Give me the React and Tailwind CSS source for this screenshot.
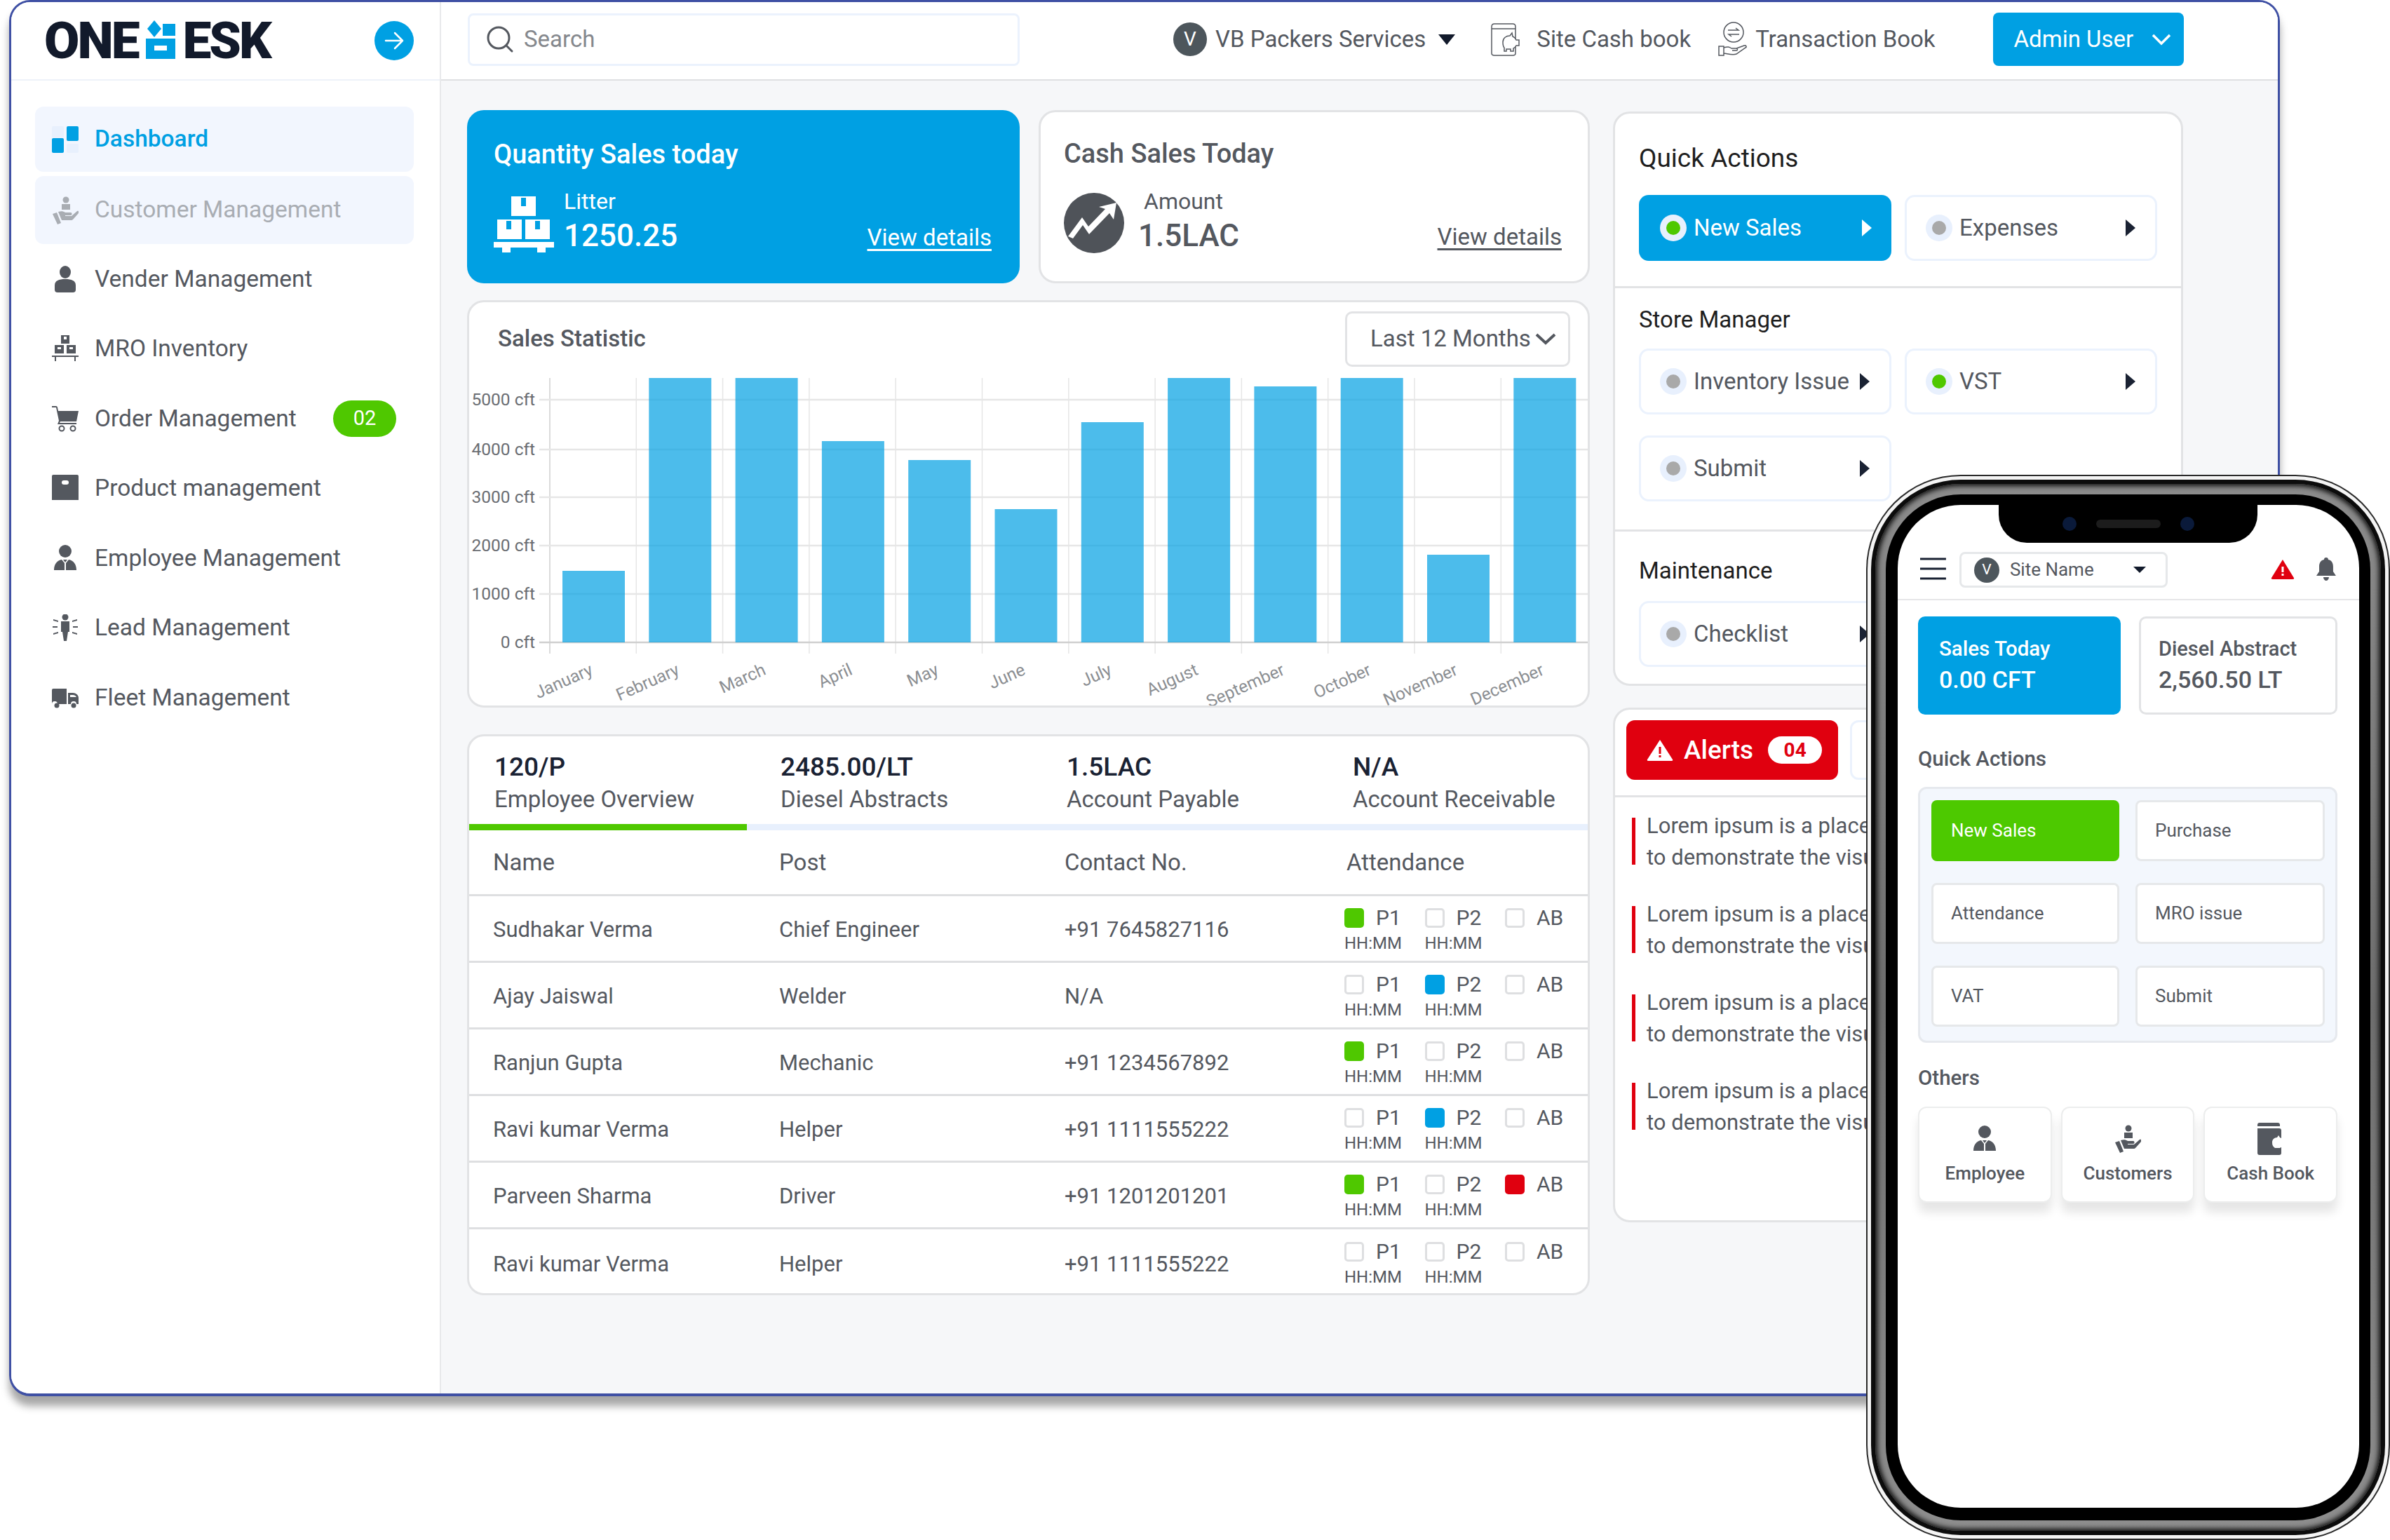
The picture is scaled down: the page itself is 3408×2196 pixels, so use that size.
const gray = '#54585f'

function Dashboard() {
  return (
    <svg viewBox="0 0 38 38" className="w-[38px] h-[38px]">
      <rect x="0" y="0" width="17" height="17" rx="2" fill="#e8f0fd" />
      <rect x="21" y="0" width="17" height="21" rx="2" fill="#00a0e3" />
      <rect x="0" y="17" width="17" height="21" rx="2" fill="#00a0e3" />
      <rect x="21" y="25" width="17" height="13" rx="2" fill="#e8f0fd" />
    </svg>
  )
}

function Customer({ fill = '#a9adb3' }) {
  return (
    <svg viewBox="0 0 38 40" className="w-[38px] h-[40px]" fill={fill}>
      <circle cx="20" cy="5" r="4.5" />
      <path d="M14 11h12v8H14z" />
      <path d="M9 22c4-1 7-1 10 1h8c2 0 2 4 0 4h-8v1h9l8-7c2-1 3 1 2 3l-8 9c-1 1-2 1-4 1H14z" />
      <path d="M1 25l6-2 6 15-5 2z" />
    </svg>
  )
}

function Vender() {
  return (
    <svg viewBox="0 0 38 38" className="w-[38px] h-[38px]" fill={gray}>
      <ellipse cx="19" cy="9" rx="8" ry="9" />
      <path d="M4 34v-6c0-7 6-9 15-9s15 2 15 9v6q0 4-4 4H8q-4 0-4-4z" />
    </svg>
  )
}

function Mro() {
  return (
    <svg viewBox="0 0 38 38" className="w-[38px] h-[38px]" fill={gray}>
      <path d="M13 0h12v12H13zM4 14h13v12H4zM21 14h13v12H21z" />
      <path d="M0 29h38v2h-4v6h-2v-6H6v6H4v-6H0z" />
      <path d="M17 2h4v4h-4zM8 17h5v3H8zM25 17h5v3h-5z" fill="#fff" />
    </svg>
  )
}

function Cart() {
  return (
    <svg viewBox="0 0 38 38" className="w-[38px] h-[38px]" fill={gray}>
      <path d="M0 1h6c1 0 2 1 2 2l1 5h29l-3 15H12l-1 2h24v2H8l2-5L6 3H0z" />
      <circle cx="14" cy="33" r="3.5" fill="none" stroke={gray} strokeWidth="2" />
      <circle cx="30" cy="33" r="3.5" fill="none" stroke={gray} strokeWidth="2" />
    </svg>
  )
}

function Product() {
  return (
    <svg viewBox="0 0 38 38" className="w-[38px] h-[38px]">
      <path d="M2 0h34q2 0 2 2v34H0V2q0-2 2-2z" fill={gray} />
      <rect x="14" y="8" width="10" height="6" rx="3" fill="#fff" />
    </svg>
  )
}

function Employee() {
  return (
    <svg viewBox="0 0 38 38" className="w-[38px] h-[38px]" fill={gray}>
      <circle cx="19" cy="9" r="9" />
      <path d="M3 36c0-9 5-14 11-15l4 5v10zM35 36c0-9-5-14-11-15l-4 5v10z" />
      <path d="M16 21h6l-3 4z" />
    </svg>
  )
}

function Lead() {
  return (
    <svg viewBox="0 0 38 38" className="w-[38px] h-[38px]" fill={gray}>
      <circle cx="19" cy="4" r="4.5" />
      <path d="M13 10h12v15h-2l-2 13h-4l-2-13h-2z" />
      <path d="M2 7l7 2v2L2 9zM36 7l-7 2v2l7-2zM1 17h7v2H1zM30 17h7v2h-7zM2 29l7-2v-2l-7 2zM36 29l-7-2v-2l7 2z" />
    </svg>
  )
}

function Fleet() {
  return (
    <svg viewBox="0 0 38 38" className="w-[38px] h-[38px]" fill={gray}>
      <path d="M2 6h19v22H8a4 4 0 0 0-8 0V8q0-2 2-2z" />
      <path d="M23 12h7c4 0 8 3 8 7v9h-3a4 4 0 0 0-8 0h-4z" />
      <path d="M26 15h4c2 0 4 1 5 3h-9z" fill="#fff" />
      <circle cx="7" cy="30" r="3.5" />
      <circle cx="31" cy="30" r="3.5" />
    </svg>
  )
}

const navRows = [
  ['Vender Management', Vender],
  ['MRO Inventory', Mro],
  ['Order Management', Cart, '02'],
  ['Product management', Product],
  ['Employee Management', Employee],
  ['Lead Management', Lead],
  ['Fleet Management', Fleet],
]

function Logo() {
  return (
    <div className="flex items-center font-black text-[73px] leading-none text-[#121a2b] tracking-[-3px]">
      <span>ONE</span>
      <svg viewBox="0 0 42 55" className="w-[42px] h-[55px] mx-[11px] -mt-[3px] shrink-0">
        <path d="M12 0l10 12-10 12L2 12z" fill="#00a0e3" />
        <rect x="24" y="5" width="18" height="17" fill="#00a0e3" />
        <path d="M0 26h42v29H0z" fill="#00a0e3" />
        <rect x="12" y="36" width="18" height="7" fill="#fff" />
      </svg>
      <span>ESK</span>
    </div>
  )
}

function Sidebar() {
  return (
    <aside className="w-[613px] shrink-0 border-r-2 border-[#e8e9eb] bg-white flex flex-col">
      <div className="h-[112px] shrink-0 flex items-center justify-between pl-[47px] pr-[37px] border-b-2 border-[#eef2f9]">
        <Logo />
        <div className="w-[56px] h-[56px] rounded-full bg-[#00a0e3] flex items-center justify-center">
          <svg viewBox="0 0 32 32" className="w-[32px] h-[32px]" fill="none" stroke="#fff" strokeWidth="2.5" strokeLinecap="round" strokeLinejoin="round">
            <path d="M4 16h24M17 5l11 11-11 11" />
          </svg>
        </div>
      </div>
      <nav className="pt-[37px] pl-[34px] w-[574px]">
        <div className="h-[93px] rounded-[12px] bg-[#f2f6fe] flex items-center pl-[24px] gap-[23px] text-[33.5px] font-medium text-[#00a0e3]">
          <Dashboard />
          <span>Dashboard</span>
        </div>
        <div className="mt-[6px] h-[97px] rounded-[12px] bg-[#f2f6fe] flex items-center pl-[24px] gap-[23px] text-[33.5px] text-[#a9adb3]">
          <Customer />
          <span>Customer Management</span>
        </div>
        {navRows.map(([label, Icon, badge]) => (
          <div key={label} className="h-[99.5px] flex items-center pl-[24px] pr-[25px] gap-[23px] text-[33.5px] text-[#54585f]">
            <Icon />
            <span>{label}</span>
            {badge && (
              <span className="ml-auto w-[90px] h-[52px] rounded-full bg-[#4fc800] text-white text-[29px] flex items-center justify-center">{badge}</span>
            )}
          </div>
        ))}
      </nav>
    </aside>
  )
}

function TopBar() {
  return (
    <header className="h-[112px] shrink-0 bg-white border-b-2 border-[#dfe0e2] flex items-center pl-[38px] pb-[4px]">
      <div className="w-[787px] h-[75px] rounded-[8px] border-[3px] border-[#ebf2fd] flex items-center pl-[23px] gap-[14px] text-[33px] text-[#85888d]">
        <svg viewBox="0 0 40 40" className="w-[40px] h-[40px]" fill="none" stroke={gray} strokeWidth="3" strokeLinecap="round">
          <circle cx="18" cy="18" r="15" />
          <path d="M29 29l8 8" />
        </svg>
        <span>Search</span>
      </div>
      <div className="ml-[219px] w-[48px] h-[48px] rounded-full bg-[#4d565c] text-white text-[28px] flex items-center justify-center">V</div>
      <span className="ml-[12px] text-[33px] text-[#54585f]">VB Packers Services</span>
      <span className="ml-[18px] w-0 h-0 border-x-[12px] border-x-transparent border-t-[15px] border-t-[#121a2b]"></span>
      <svg viewBox="0 0 46 48" className="ml-[50px] w-[46px] h-[48px]" fill="none" stroke={gray} strokeWidth="1.5">
        <path d="M2 6q0-4 4-4h26q4 0 4 4v38q0 3-4 3H6q-4 0-4-3zM2 9h34" />
        <path d="M18 28c0-6 5-9 10-9l3-4 1 5c3 1 4 3 5 5h4v8h-4c-1 2-2 3-4 4v4h-4v-3h-6v3h-3v-5c-2-2-2-4-2-8z" fill="#fff" />
      </svg>
      <span className="ml-[20px] text-[33px] text-[#54585f]">Site Cash book</span>
      <svg viewBox="0 0 42 50" className="ml-[39px] w-[42px] h-[50px]" fill="none" stroke={gray} strokeWidth="1.5">
        <circle cx="22" cy="15" r="14" />
        <path d="M14 12h15l-4-3M30 18H15l4 3" />
        <path d="M1 35h7v13H1zM8 37c6-2 8-1 11 1h7c2 0 2 3 0 3h-6M26 38l11-4c3-1 4 2 2 3L26 46c-5 2-11 0-18-1" />
      </svg>
      <span className="ml-[11px] text-[33px] text-[#54585f]">Transaction Book</span>
      <div className="ml-[82px] w-[272px] h-[76px] rounded-[8px] bg-[#00a0e3] flex items-center pl-[30px] text-[33px] text-white">
        <span>Admin User</span>
        <svg viewBox="0 0 28 18" className="ml-[26px] w-[28px] h-[18px]" fill="none" stroke="#fff" strokeWidth="3.5">
          <path d="M2 3l12 12L26 3" />
        </svg>
      </div>
    </header>
  )
}

function StatCards() {
  return (
    <div className="flex gap-[27px]">
      <div className="w-[788px] h-[247px] rounded-[24px] bg-[#00a0e3] text-white pl-[38px] pr-[40px] pt-[40px]">
        <div className="text-[38px] font-medium leading-[46px]">Quantity Sales today</div>
        <div className="mt-[37px] flex">
          <svg viewBox="0 0 86 80" className="w-[86px] h-[80px] shrink-0" fill="#fff">
            <path d="M25 0h35v28H25z" />
            <path d="M5 33h35v28H5zM45 33h35v28H45z" />
            <path d="M0 65h86v8H74v7H62v-7H24v7H12v-7H0z" />
            <path d="M39 2h7v12h-7zM18 35h7v12h-7zM59 35h7v12h-7z" fill="#00a0e3" />
          </svg>
          <div className="ml-[14px] -mt-[16px]">
            <div className="text-[32px] leading-[46px]">Litter</div>
            <div className="text-[44px] font-medium leading-[52px]">1250.25</div>
          </div>
          <span className="ml-auto self-end text-[33px] underline underline-offset-[5px] leading-[46px]">View details</span>
        </div>
      </div>
      <div className="w-[786px] h-[247px] rounded-[24px] bg-white border-[3px] border-[#e2e3e5] pl-[33px] pr-[37px] pt-[36px] text-[#54585f]">
        <div className="text-[38px] font-medium leading-[46px]">Cash Sales Today</div>
        <div className="mt-[33px] flex">
          <svg viewBox="0 0 86 86" className="w-[86px] h-[86px] shrink-0">
            <circle cx="43" cy="43" r="43" fill="#4f5359" />
            <path d="M6 62l20-27 9 13 24-25-9-3 25-6-4 24-6-9-29 30-9-13-14 19z" fill="#fff" />
          </svg>
          <div className="ml-[20px] -mt-[11px]">
            <div className="text-[32px] leading-[46px] ml-[8px]">Amount</div>
            <div className="text-[44px] font-medium leading-[52px]">1.5LAC</div>
          </div>
          <span className="ml-auto self-end text-[33px] underline underline-offset-[5px] leading-[46px] mb-[1px]">View details</span>
        </div>
      </div>
    </div>
  )
}

const months = ['January', 'February', 'March', 'April', 'May', 'June', 'July', 'August', 'September', 'October', 'November', 'December']
const tops = [814, 539, 539, 629, 656, 726, 602, 539, 551, 539, 791, 539]
const yTicks = [[570, '5000 cft'], [641, '4000 cft'], [709, '3000 cft'], [778, '2000 cft'], [847, '1000 cft'], [916, '0 cft']]

function SalesChart() {
  return (
    <div className="mt-[24px] h-[581px] rounded-[24px] bg-white border-[3px] border-[#e2e3e5] overflow-hidden">
      <div className="h-[96px] flex items-center justify-between pl-[41px] pr-[25px] pt-[8px]">
        <span className="text-[33px] font-medium text-[#54585f]">Sales Statistic</span>
        <div className="w-[321px] h-[79px] rounded-[10px] border-[3px] border-[#e2e3e5] flex items-center pl-[33px] text-[33px] text-[#54585f]">
          <span>Last 12 Months</span>
          <svg viewBox="0 0 30 18" className="ml-[6px] w-[30px] h-[18px]" fill="none" stroke={gray} strokeWidth="4">
            <path d="M2 3l13 12L28 3" />
          </svg>
        </div>
      </div>
      {/* viewBox uses page coordinates so the numbers read straight off the picture */}
      <svg viewBox="669 527 1595 479" className="w-[1595px] h-[479px] block">
        {months.map((m, i) => (
          <line key={m} x1={784 + 123.3 * i} x2={784 + 123.3 * i} y1="539" y2="932" stroke={i === 0 ? '#cfcfcf' : '#e6e6e6'} strokeWidth="1.5" />
        ))}
        {yTicks.map(([y, label]) => (
          <g key={label}>
            <line x1="769" x2="2264" y1={y} y2={y} stroke={y === 916 ? '#cfcfcf' : '#e6e6e6'} strokeWidth="2.5" />
            <text x="763" y={y + 8} textAnchor="end" fontFamily="Roboto, sans-serif" fontSize="24.5" fill="#6b6e73">{label}</text>
          </g>
        ))}
        {months.map((m, i) => (
          <rect key={m} x={802 + 123.3 * i} y={tops[i]} width="89" height={916 - tops[i]} fill="#00a0e3" fillOpacity="0.7" />
        ))}
        {months.map((m, i) => (
          <text key={m} x={847 + 123.3 * i} y="961" textAnchor="end" fontFamily="Roboto, sans-serif" fontSize="24.5" fill="#8b8e92" transform={`rotate(-24 ${847 + 123.3 * i} 961)`}>{m}</text>
        ))}
      </svg>
    </div>
  )
}

const tabs = [
  ['120/P', 'Employee Overview'],
  ['2485.00/LT', 'Diesel Abstracts'],
  ['1.5LAC', 'Account Payable'],
  ['N/A', 'Account Receivable'],
]

// p1, p2, ab colours, empty string is an unchecked box
const rows = [
  ['Sudhakar Verma', 'Chief Engineer', '+91 7645827116', ['#4fc800', '', '']],
  ['Ajay Jaiswal', 'Welder', 'N/A', ['', '#00a0e3', '']],
  ['Ranjun Gupta', 'Mechanic', '+91 1234567892', ['#4fc800', '', '']],
  ['Ravi kumar Verma', 'Helper', '+91 1111555222', ['', '#00a0e3', '']],
  ['Parveen Sharma', 'Driver', '+91 1201201201', ['#4fc800', '', '#e0000f']],
  ['Ravi kumar Verma', 'Helper', '+91 1111555222', ['', '', '']],
]

function CheckCell({ color, label, time }) {
  return (
    <div className="w-[114.5px] shrink-0">
      <div className="flex items-center h-[30px]">
        {color ? (
          <span className="w-[28px] h-[28px] rounded-[5px]" style={{ backgroundColor: color }}></span>
        ) : (
          <span className="w-[28px] h-[28px] rounded-[5px] border-[3px] border-[#dedfe1] bg-white"></span>
        )}
        <span className="ml-[17px] text-[30px] leading-none">{label}</span>
      </div>
      {time && <div className="mt-[6px] text-[24px] leading-[30px] whitespace-nowrap">HH:MM</div>}
    </div>
  )
}

function EmployeeTable() {
  return (
    <div className="mt-[38px] h-[800px] rounded-[24px] bg-white border-[3px] border-[#e2e3e5] overflow-hidden text-[#54585f]">
      <div className="grid grid-cols-[408px_408px_408px_370px] h-[125px] pl-[36px]">
        {tabs.map(([value, label]) => (
          <div key={label} className="pt-[20px]">
            <div className="text-[37px] font-medium text-[#1a2233] leading-[48px]">{value}</div>
            <div className="text-[33px] leading-[44px] whitespace-nowrap">{label}</div>
          </div>
        ))}
      </div>
      <div className="h-[9px] bg-[#e8f0fd]">
        <div className="h-full w-[396px] bg-[#4fc800]"></div>
      </div>
      <div className="grid grid-cols-[408px_407px_402px_1fr] h-[94px] items-center pl-[34px] text-[33px] border-b-[3px] border-[#dedfe1]">
        <span>Name</span>
        <span>Post</span>
        <span>Contact No.</span>
        <span>Attendance</span>
      </div>
      {rows.map(([name, post, phone, marks], i) => (
        <div key={i} className={`grid grid-cols-[408px_407px_399px_1fr] h-[95px] items-center pl-[34px] pt-[5px] text-[31px] ${i < rows.length - 1 ? 'border-b-[3px] border-[#dedfe1]' : ''}`}>
          <span>{name}</span>
          <span>{post}</span>
          <span>{phone}</span>
          <div className="flex">
            <CheckCell color={marks[0]} label="P1" time />
            <CheckCell color={marks[1]} label="P2" time />
            <CheckCell color={marks[2]} label="AB" />
          </div>
        </div>
      ))}
    </div>
  )
}

function ActionBtn({ label, on, dot }) {
  return (
    <div className={`w-[360px] h-[94px] rounded-[14px] flex items-center text-[33px] ${on ? 'bg-[#00a0e3] text-white pl-[30px]' : 'bg-white border-[3px] border-[#ebf2fd] text-[#54585f] pl-[27px]'}`}>
      <span className="w-[38px] h-[38px] rounded-full bg-[#e8f0fd] flex items-center justify-center shrink-0">
        <span className="w-[20px] h-[20px] rounded-full" style={{ backgroundColor: dot === 'green' ? '#4fc800' : '#a9a9a9' }}></span>
      </span>
      <span className="ml-[10px] whitespace-nowrap">{label}</span>
      <span className={`ml-auto mr-[28px] w-0 h-0 shrink-0 border-y-[12px] border-y-transparent border-l-[14px] ${on ? 'border-l-white' : 'border-l-[#1a2233]'}`}></span>
    </div>
  )
}

function QuickActions() {
  return (
    <div className="h-[819px] rounded-[24px] bg-white border-[3px] border-[#e2e3e5] overflow-hidden">
      <div className="h-[249px] border-b-[3px] border-[#e2e3e5] pl-[34px]">
        <div className="pt-[38px] text-[37px] leading-[52px] text-[#1e1e1e]">Quick Actions</div>
        <div className="mt-[26px] flex gap-[19px]">
          <ActionBtn label="New Sales" on dot="green" />
          <ActionBtn label="Expenses" />
        </div>
      </div>
      <div className="h-[347px] border-b-[3px] border-[#e2e3e5] pl-[34px]">
        <div className="pt-[23px] text-[33px] leading-[44px] text-[#1e1e1e]">Store Manager</div>
        <div className="mt-[19px] flex flex-wrap gap-x-[19px] gap-y-[30px]">
          <ActionBtn label="Inventory Issue" />
          <ActionBtn label="VST" dot="green" />
          <ActionBtn label="Submit" />
        </div>
      </div>
      <div className="pl-[34px]">
        <div className="pt-[34px] text-[33px] leading-[44px] text-[#1e1e1e]">Maintenance</div>
        <div className="mt-[21px]">
          <ActionBtn label="Checklist" />
        </div>
      </div>
    </div>
  )
}

function Alerts() {
  return (
    <div className="mt-[31px] h-[734px] rounded-[24px] bg-white border-[3px] border-[#e2e3e5] overflow-hidden">
      <div className="h-[125px] border-b-[3px] border-[#e2e3e5] flex pt-[15px] pl-[16px] gap-[17px]">
        <div className="w-[302px] h-[85px] rounded-[12px] bg-[#e0000f] flex items-center pl-[29px] text-white text-[37px] font-medium">
          <svg viewBox="0 0 38 32" className="w-[38px] h-[32px]">
            <path d="M19 1l18 28q1 2-2 2H3q-3 0-2-2z" fill="#fff" />
            <rect x="17.5" y="11" width="3" height="10" fill="#e0000f" />
            <rect x="17.5" y="23" width="3" height="3" fill="#e0000f" />
          </svg>
          <span className="ml-[15px]">Alerts</span>
          <span className="ml-[21px] w-[77px] h-[39px] rounded-full bg-white text-[#e0000f] text-[28px] font-bold flex items-center justify-center">04</span>
        </div>
        <div className="w-[200px] h-[85px] rounded-[12px] bg-white border-[3px] border-[#ebf2fd]"></div>
      </div>
      {[0, 1, 2, 3].map((i) => (
        <div key={i} className={`flex ml-[24px] ${i === 0 ? 'mt-[29px]' : 'mt-[47px]'}`}>
          <div className="w-[5px] h-[67px] bg-[#e0000f] shrink-0"></div>
          <div className="ml-[16px] -mt-[11px] text-[31px] leading-[45px] text-[#54585f] whitespace-nowrap">
            <div>Lorem ipsum is a placeholder text commonly used</div>
            <div>to demonstrate the visual form of a document</div>
          </div>
        </div>
      ))}
    </div>
  )
}

function Phone() {
  return (
    <div className="absolute left-[2661px] top-[677px] w-[747px] h-[1519px] rounded-[135px] bg-[#2a2a2a] p-[2px]">
      <div className="w-full h-full rounded-[133px] bg-[#f4f4f4] p-[5px]">
        <div className="w-full h-full rounded-[128px] bg-[#0c0c0c] p-[6px]">
          <div className="w-full h-full rounded-[122px] bg-linear-to-b from-[#8c8c8c] via-[#6e6e6e] to-[#8e8e8e] shadow-[inset_0_0_7px_3px_#111] p-[15px]">
            <div className="w-full h-full rounded-[107px] bg-black pt-[15px] pl-[17px] pr-[16px] pb-[18px]">
              <PhoneScreen />
            </div>
          </div>
        </div>
      </div>
    </div>
  )
}

const phoneButtons = ['New Sales', 'Purchase', 'Attendance', 'MRO issue', 'VAT', 'Submit']

function PhoneScreen() {
  return (
    <div className="relative w-full h-full rounded-[90px] bg-white overflow-hidden text-[#54585f]">
      {/* notch */}
      <div className="absolute left-[144px] top-0 w-[369px] h-[54px] bg-black rounded-b-[40px] flex items-center justify-center gap-[28px]">
        <span className="w-[20px] h-[20px] rounded-full bg-[#0a1a3a]"></span>
        <span className="w-[92px] h-[12px] rounded-full bg-[#1c1c1c]"></span>
        <span className="w-[20px] h-[20px] rounded-full bg-[#0a1a3a]"></span>
      </div>
      <div className="h-[136px] border-b-2 border-[#e6e6e8] pt-[67px] pl-[32px] pr-[33px] flex items-start">
        <svg viewBox="0 0 37 32" className="mt-[8px] w-[37px] h-[32px]" stroke="#1a2233" strokeWidth="3">
          <path d="M0 2h37M0 16h37M0 30h37" />
        </svg>
        <div className="ml-[19px] w-[298px] h-[51px] rounded-[8px] border-[3px] border-[#e6e8ea] flex items-center pl-[18px]">
          <span className="w-[36px] h-[36px] rounded-full bg-[#4d565c] text-white text-[21px] flex items-center justify-center">V</span>
          <span className="ml-[15px] text-[26px]">Site Name</span>
          <span className="ml-auto mr-[28px] w-0 h-0 border-x-[9px] border-x-transparent border-t-[9px] border-t-[#121a2b]"></span>
        </div>
        <svg viewBox="0 0 34 30" className="ml-[147px] mt-[10px] w-[34px] h-[30px]">
          <path d="M17 1l16 26q1 2-2 2H3q-3 0-2-2z" fill="#e0000f" />
          <rect x="15.5" y="11" width="3" height="8" fill="#fff" />
          <rect x="15.5" y="21" width="3" height="3" fill="#fff" />
        </svg>
        <svg viewBox="0 0 28 34" className="ml-[31px] mt-[8px] w-[28px] h-[34px]" fill="#54585f">
          <path d="M14 0c2 0 3 1 3 3 5 1 7 5 7 10v7l4 6H0l4-6v-7c0-5 2-9 7-10 0-2 1-3 3-3z" />
          <path d="M10 28h8c0 3-2 5-4 5s-4-2-4-5z" />
        </svg>
      </div>
      <div className="pl-[29px] pr-[31px] pt-[23px]">
        <div className="flex gap-[26px]">
          <div className="w-[289px] h-[140px] rounded-[10px] bg-[#00a0e3] text-white pl-[30px] pt-[26px]">
            <div className="text-[29.5px] font-medium leading-[40px]">Sales Today</div>
            <div className="text-[34px] font-medium leading-[46px] mt-[1px]">0.00 CFT</div>
          </div>
          <div className="w-[283px] h-[140px] rounded-[10px] border-[3px] border-[#e2e3e5] pl-[25px] pt-[23px] whitespace-nowrap">
            <div className="text-[29px] font-medium leading-[40px]">Diesel Abstract</div>
            <div className="text-[34px] font-medium leading-[46px] mt-[1px]">2,560.50 LT</div>
          </div>
        </div>
        <div className="mt-[47px] text-[29.5px] font-medium leading-[32px]">Quick Actions</div>
        <div className="mt-[24px] h-[365px] rounded-[12px] border-[3px] border-[#e6e9ee] bg-[#f3f7fd] pl-[16px] pt-[16px] grid grid-cols-[268px_270px] auto-rows-[87px] gap-x-[23px] gap-y-[31px]">
          {phoneButtons.map((label, i) => (
            <div key={label} className={`rounded-[8px] flex items-center text-[26px] ${i === 0 ? 'bg-[#4dc900] text-white pl-[28px]' : 'bg-white border-[3px] border-[#e6e8ea] pl-[25px]'}`}>
              {label}
            </div>
          ))}
        </div>
        <div className="mt-[34px] text-[29.5px] font-medium leading-[32px]">Others</div>
        <div className="mt-[25px] flex gap-[13px]">
          <PhoneTile label="Employee">
            <Employee />
          </PhoneTile>
          <PhoneTile label="Customers">
            <Customer fill={gray} />
          </PhoneTile>
          <PhoneTile label="Cash Book">
            <svg viewBox="0 0 40 46" className="w-[40px] h-[46px]" fill={gray}>
              <path d="M4 0h26q3 0 3 3v2H1V3q0-3 3-3z" />
              <path d="M1 8h31q3 0 3 3v32q0 3-3 3H4q-3 0-3-3z" />
              <path d="M22 28c0-4 3-7 7-7l2-3 2 3c3 1 4 3 5 5h2v6h-3c-1 2-2 3-4 4H26c-3-2-4-4-4-8z" fill="#fff" />
            </svg>
          </PhoneTile>
        </div>
      </div>
    </div>
  )
}

function PhoneTile({ label, children }) {
  return (
    <div className="w-[192px] h-[137px] rounded-[12px] bg-white border-2 border-[#eceded] shadow-[0_14px_14px_rgba(0,0,0,0.1)] flex flex-col items-center pt-[21px] text-[26px] font-medium">
      <div className="h-[46px] flex items-center">{children}</div>
      <span className="mt-[11px] leading-[30px]">{label}</span>
    </div>
  )
}

export default function App() {
  return (
    <div className="relative w-[3408px] h-[2196px] overflow-hidden bg-white font-[family-name:Roboto,sans-serif]">
      <div className="ml-[13px] w-[3238px] h-[1991px] rounded-[30px] border-[3px] border-b-[4px] border-[#3f50a4] bg-white shadow-[0_14px_12px_rgba(0,0,0,0.35)] overflow-hidden flex">
        <Sidebar />
        <div className="flex-1 flex flex-col bg-[#f6f7f9]">
          <TopBar />
          <main className="flex pt-[42px] pl-[37px]">
            <div className="w-[1601px] shrink-0">
              <StatCards />
              <SalesChart />
              <EmployeeTable />
            </div>
            <div className="ml-[33px] w-[813px] shrink-0 pt-[2px]">
              <QuickActions />
              <Alerts />
            </div>
          </main>
        </div>
      </div>
      <Phone />
    </div>
  )
}
